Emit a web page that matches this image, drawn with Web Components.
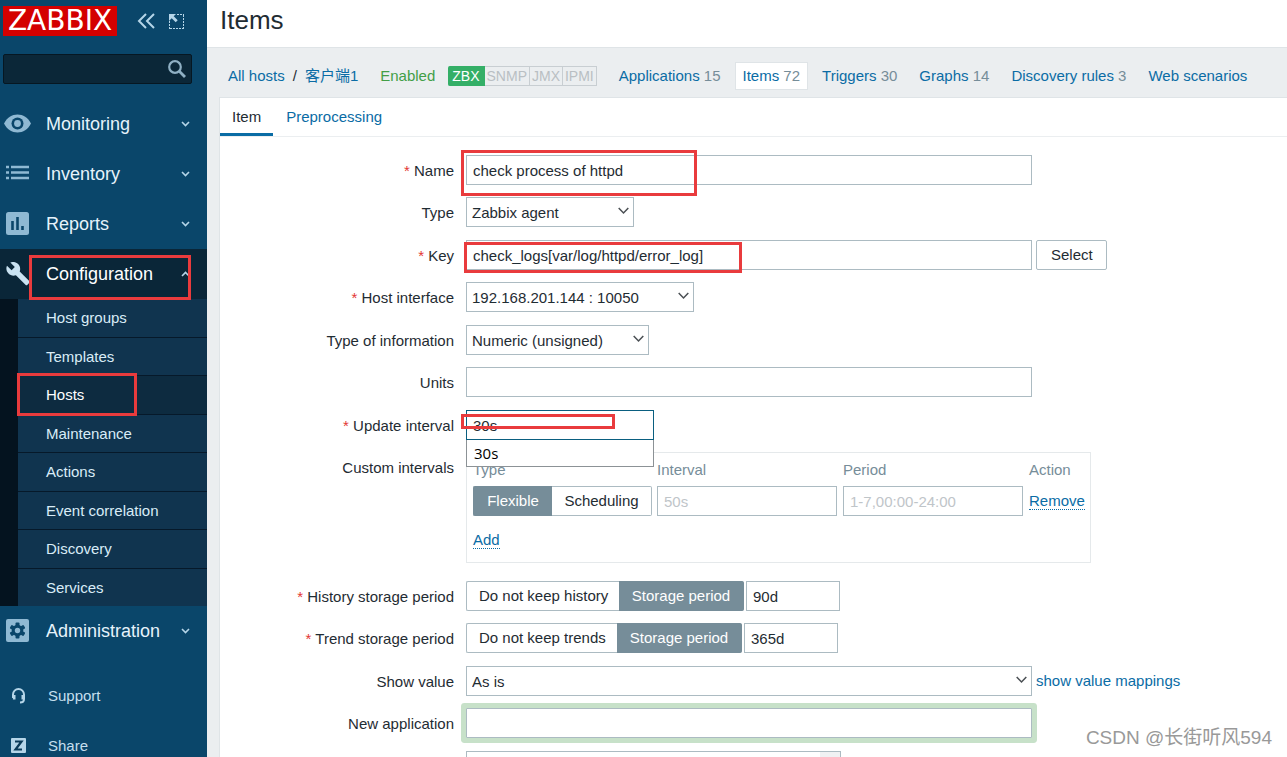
<!DOCTYPE html>
<html lang="en">
<head>
<meta charset="utf-8">
<title>Items</title>
<style>
html, body { margin: 0; height: 100%; }
body {
  font: 15px/20px "Liberation Sans", "Noto Sans CJK SC", sans-serif;
  color: #1f2c33;
  overflow: hidden;
}
</style>
</head>
<body>
<zbx-app></zbx-app>

<template id="t-app">
  <style>
    :host { display: flex; height: 100vh; overflow: hidden; background: #ebeef0; position: relative; }
    zbx-sidebar { flex: 0 0 207px; }
    main { flex: 1; min-width: 0; display: flex; flex-direction: column; overflow: hidden; }
    h1, zbx-host-nav { flex-shrink: 0; }
    h1 { margin: 0; padding: 0 13px 6px; height: 41px; line-height: 41px; font-size: 26px; font-weight: normal; background: #fff; border-bottom: 1px solid #dfe4e7; }
    .sheet { flex: 1 0 auto; margin-left: 12px; background: #fff; border: solid #dfe4e7; border-width: 1px 0 0 1px; }
    .watermark { position: absolute; right: 15px; bottom: 6px; font-size: 19px; line-height: 26px; color: #999; text-shadow: 1px 1px 0 #fff; white-space: nowrap; }
  </style>
  <zbx-sidebar></zbx-sidebar>
  <main>
    <h1>Items</h1>
    <zbx-host-nav></zbx-host-nav>
    <div class="sheet">
      <zbx-tabs></zbx-tabs>
      <zbx-item-form></zbx-item-form>
    </div>
  </main>
  <div class="watermark">CSDN @长街听风594</div>
</template>

<template id="t-sidebar">
  <style>
    :host { display: flex; flex-direction: column; background: #0a466a; color: #e6f3fb; overflow: hidden; }
    header, form, nav { flex-shrink: 0; }
    header { display: flex; align-items: center; padding: 6px 0 0 3px; height: 30px; }
    .logo { background: #d40000; color: #fff; font: 28px/30px "DejaVu Sans", sans-serif; width: 114px; height: 30px; text-align: center; text-decoration: none; }
    header button { background: none; border: 0; padding: 0; width: 20px; height: 20px; display: block; }
    .compact { margin: 0 10px 0 19px; }
    svg { display: block; }
    form { margin: 18px 15px 15px 3px; height: 30px; box-sizing: border-box; display: flex; align-items: center; background: #0b2738; border: 1px solid #061722; border-radius: 2px; padding-right: 4px; }
    form input { flex: 1; min-width: 0; background: none; border: 0; outline: 0; color: #fff; font: inherit; }
    form button { background: none; border: 0; padding: 0; }
    nav { display: block; }
    .foot { margin-top: 15px; }
  </style>
  <header>
    <a class="logo" href="#">ZABBIX</a>
    <button class="compact" type="button" aria-label="Collapse sidebar"><svg width="20" height="20" viewBox="0 0 20 20" fill="none" stroke="#b5d5e8" stroke-width="2"><path d="M10 3 3 10l7 7M18 3l-7 7 7 7"/></svg></button>
    <button type="button" aria-label="Hide sidebar"><svg width="20" height="20" viewBox="0 0 20 20"><path d="M11 3.500H18M17.500 4v14M3.500 10v8M4 17.500H18" fill="none" stroke="#b5d5e8" stroke-dasharray="2 1"/><path d="M3 3h7L7.700 5.300l4 4-2 2-4-4L3 10z" fill="#b5d5e8"/></svg></button>
  </header>
  <form role="search">
    <input type="text" aria-label="Search">
    <button type="button" aria-label="Search"><svg width="20" height="20" viewBox="0 0 20 20" fill="none" stroke="#8fb0c4"><circle cx="8" cy="8" r="5.800" stroke-width="2.200"/><path d="m12.300 12.300 5.700 5.700" stroke-width="2.800"/></svg></button>
  </form>
  <nav>
    <zbx-menu-item label="Monitoring"><svg slot="icon" width="28" height="20" viewBox="0 0 28 20"><path d="M0 9.500C3 3.500 8 .500 13.500.500S24 3.500 27 9.500c-3 6-8 9-13.500 9S3 15.500 0 9.500z" fill="#8fb9d3"/><circle cx="13.500" cy="9.500" r="6" fill="#0a466a"/><circle cx="13.500" cy="9.500" r="3.400" fill="#8fb9d3"/></svg></zbx-menu-item>
    <zbx-menu-item label="Inventory"><svg slot="icon" width="28" height="20" viewBox="0 0 28 20"><path d="M2 3h3M7 3h18M2 8.500h3M7 8.500h18M2 14h3M7 14h18" stroke="#8fb9d3" stroke-width="2.500"/></svg></zbx-menu-item>
    <zbx-menu-item label="Reports"><svg slot="icon" width="28" height="24" viewBox="0 0 28 24"><rect x="2" y="0" width="23" height="23" rx="2.500" fill="#8fb9d3"/><path d="M8.500 9v9M13.500 5v13M18.500 14v4" stroke="#0a466a" stroke-width="2.600"/></svg></zbx-menu-item>
    <zbx-menu-item label="Configuration" open>
      <svg slot="icon" width="28" height="24" viewBox="2 1 28 24"><path d="m27.500 20.200-9.800-9.800c1-2.500.400-5.400-1.600-7.400C14 .900 10.800.400 8.300 1.600l4.500 4.500-3.200 3.200L5 4.800C3.800 7.300 4.300 10.400 6.500 12.600c2 2 4.900 2.600 7.400 1.600l9.800 9.800c.400.400 1.100.400 1.500 0l2.400-2.400c.400-.400.400-1 0-1.400z" fill="#c9e2f1"/></svg>
      <zbx-submenu></zbx-submenu>
    </zbx-menu-item>
    <zbx-menu-item label="Administration"><svg slot="icon" width="28" height="24" viewBox="0 0 28 24"><rect x="2" y="0" width="23" height="23" rx="2" fill="#8fb9d3"/><g transform="translate(13.500 11.500)" fill="#0a466a"><circle r="5.800"/><rect x="-2" y="-8" width="4" height="16" rx="1"/><rect x="-2" y="-8" width="4" height="16" rx="1" transform="rotate(60)"/><rect x="-2" y="-8" width="4" height="16" rx="1" transform="rotate(120)"/><circle r="2.700" fill="#8fb9d3"/></g></svg></zbx-menu-item>
  </nav>
  <nav class="foot">
    <zbx-menu-item minor label="Support"><svg slot="icon" width="28" height="20" viewBox="0 0 28 20" fill="none" stroke="#b5d5e8"><path d="M13 12V8.500a5.500 5.500 0 0 1 11 0V13q0 3.500-4 3.500" stroke-width="2"/><path d="M14.200 9v4.500M22.800 9v4.500" stroke-width="2.600"/></svg></zbx-menu-item>
    <zbx-menu-item minor label="Share"><svg slot="icon" width="28" height="20" viewBox="0 0 28 20"><rect x="11" y="2" width="15" height="15" rx="1" fill="#b5d5e8"/><path d="M15 5.500h6.500l-6 8H22" fill="none" stroke="#0a3a58" stroke-width="2.200"/></svg></zbx-menu-item>
  </nav>
</template>

<template id="t-menu-item">
  <style>
    :host { display: block; }
    a { position: relative; display: flex; align-items: center; height: 50px; padding: 0 17px 0 4px; color: #e6f3fb; text-decoration: none; font-size: 18px; }
    .ico { flex: 0 0 42px; height: 27px; display: flex; align-items: center; }
    .ico ::slotted(svg) { display: block; }
    :host([minor]) a { font-size: 15px; color: #c5dfee; padding-left: 0; }
    :host([minor]) .ico { flex-basis: 48px; }
    .name { flex: 1; }
    .arrow { display: block; }
    :host([open]) .arrow { transform: scaleY(-1); }
    :host([minor]) .arrow { display: none; }
    :host([open]) a { background: #0a2638; color: #fff; }
    :host([open]) .mark { display: block; }
    .mark { display: none; position: absolute; left: 29px; right: 16px; top: 6px; height: 45px; box-sizing: border-box; border: 3px solid #e93b3d; z-index: 2; }
  </style>
  <a href="#"><span class="ico"><slot name="icon"></slot></span><span class="name"></span>
    <svg class="arrow" width="9" height="6" viewBox="0 0 9 6" fill="none" stroke="#b5d5e8" stroke-width="1.600"><path d="m1 1 3.500 3.500L8 1"/></svg><span class="mark"></span></a>
  <slot></slot>
</template>

<template id="t-submenu">
  <style>
    :host { display: block; padding-left: 18px; background: #04131f; }
    ul { list-style: none; margin: 0; padding: 0; background: #10344f; }
    li { position: relative; height: 38px; border-bottom: 1px solid #06192a; box-sizing: border-box; }
    li:nth-child(odd) { height: 39px; }
    li:last-child { height: 37px; border: 0; }
    a { display: flex; align-items: center; height: 100%; padding-left: 28px; color: #d9ecf7; text-decoration: none; }
    .on { background: #0d2b40; }
    .on a { color: #fff; padding-left: 26px; border-left: 2px solid #b5d5e8; }
    .mark { position: absolute; left: -1px; top: -3px; width: 120px; height: 43px; box-sizing: border-box; border: 3px solid #e93b3d; z-index: 2; }
  </style>
  <ul>
    <li><a href="#">Host groups</a></li>
    <li><a href="#">Templates</a></li>
    <li class="on"><a href="#">Hosts</a><span class="mark"></span></li>
    <li><a href="#">Maintenance</a></li>
    <li><a href="#">Actions</a></li>
    <li><a href="#">Event correlation</a></li>
    <li><a href="#">Discovery</a></li>
    <li><a href="#">Services</a></li>
  </ul>
</template>

<template id="t-host-nav">
  <style>
    :host { display: flex; align-items: center; height: 49px; padding: 6px 12px 0 21px; box-sizing: border-box; white-space: nowrap; }
    a { color: #0a6ca5; text-decoration: none; }
    .sep { margin: 0 8px; }
    .ok { color: #429e47; margin: 0 13px 0 22px; }
    .ifaces { display: flex; margin-right: 14px; font-size: 14px; line-height: 18px; }
    .ifaces span { border: 1px solid #c8ced2; border-left-width: 0; color: #b9bfc3; padding: 0 2px; }
    .ifaces .up { background: #34af67; border-color: #34af67; color: #fff; border-radius: 2px 0 0 2px; padding: 0 4px; }
    nav { display: flex; gap: 6px; }
    nav a { padding: 3px 7px; border: 1px solid transparent; }
    nav .on { background: #fff; border-color: #dfe4e7; }
    small { font-size: inherit; color: #768d99; }
  </style>
  <a href="#">All hosts</a><span class="sep">/</span><a href="#">客户端1</a>
  <span class="ok">Enabled</span>
  <span class="ifaces"><span class="up">ZBX</span><span>SNMP</span><span>JMX</span><span>IPMI</span></span>
  <nav>
    <a href="#">Applications <small>15</small></a>
    <a class="on" href="#">Items <small>72</small></a>
    <a href="#">Triggers <small>30</small></a>
    <a href="#">Graphs <small>14</small></a>
    <a href="#">Discovery rules <small>3</small></a>
    <a href="#">Web scenarios</a>
  </nav>
</template>

<template id="t-tabs">
  <style>
    :host { display: flex; height: 38px; border-bottom: 1px solid #ebeef0; }
    a { color: #0a6ca5; text-decoration: none; padding: 9px 13px 0; height: 38px; box-sizing: border-box; border-bottom: 3px solid transparent; }
    .on { color: #1f2c33; padding: 9px 12px 0 12px; border-color: #0a6ca5; }
  </style>
  <a class="on" href="#">Item</a><a href="#">Preprocessing</a>
</template>

<template id="t-row">
  <style>
    :host { display: flex; align-items: flex-start; padding-bottom: 12px; }
    :host(:nth-child(odd)) { padding-bottom: 13px; }
    :host([wide]) { padding-bottom: 18px; }
    .label { flex: 0 0 234px; height: 30px; text-align: right; line-height: 32px; margin-right: 12px; }
    :host([required]) .label::before { content: "* "; color: #e33734; }
    .field { flex: 1; min-width: 0; display: flex; align-items: center; gap: 4px; position: relative; }
  </style>
  <div class="label"><slot name="label"></slot></div>
  <div class="field"><slot></slot></div>
</template>

<template id="t-select">
  <style>
    :host { display: block; position: relative; }
    ::slotted(select) { appearance: none; display: block; width: 100%; height: 30px; box-sizing: border-box; margin: 0; padding: 1px 24px 0 5px; border: 1px solid #acbbc2; border-radius: 0; background: #fff; color: #1f2c33; font: inherit; }
    svg { position: absolute; right: 5px; top: 10px; pointer-events: none; }
  </style>
  <slot></slot>
  <svg width="11" height="8" viewBox="0 0 11 8" fill="none" stroke="#4a4f53" stroke-width="1.500"><path d="m.700 1 4.800 5 4.800-5"/></svg>
</template>

<template id="t-mark">
  <style>
    :host { position: absolute; box-sizing: border-box; border: 3px solid #e93b3d; pointer-events: none; z-index: 3; }
  </style>
</template>

<template id="t-form">
  <style>
    :host { display: block; padding-top: 18px; }
    input, button { font: inherit; color: inherit; box-sizing: border-box; margin: 0; }
    input[type=text] { height: 30px; border: 1px solid #acbbc2; background: #fff; padding: 0 6px; outline: 0; min-width: 0; }
    input::placeholder { color: #bfc5c9; }
    .full { flex: 0 1 566px; }
    button.box { height: 30px; border: 1px solid #acbbc2; border-radius: 2px; background: #fff; padding: 0 14px; width: 71px; }
    a { color: #0a6ca5; text-decoration: none; }
    .act { border-bottom: 1px dotted #0a6ca5; line-height: 16px; display: inline-block; }
    .seg { display: flex; position: relative; height: 30px; box-sizing: border-box; margin-right: -2px; line-height: 28px; }
    .seg input { position: absolute; opacity: 0; width: 1px; height: 1px; }
    .seg label { border: 1px solid #acbbc2; padding: 0 12px; text-align: center; white-space: nowrap; box-sizing: border-box; }
    .seg label:first-of-type { border-right: 0; border-radius: 2px 0 0 2px; }
    .seg label:last-of-type { border-left: 0; border-radius: 0 2px 2px 0; }
    .seg input:checked + label { background: #768d99; border-color: #768d99; color: #fff; }
    .keep label:first-of-type { width: 153px; }
    .trend label:first-of-type { width: 151px; }
    .keep label:last-of-type { width: 125px; }
    .short { width: 94px; }
    #delay { width: 188px; border-color: #0a5f80; }
    .options { position: absolute; top: 30px; left: 0; width: 188px; height: 27px; box-sizing: border-box; margin: 0; padding: 0 7px; list-style: none; border: 1px solid #8c9296; border-top: 0; background: #fff; color: #000; font: 15px/27px "Open Sans", sans-serif; z-index: 2; }
    .intervals { flex: 0 1 625px; height: 111px; box-sizing: border-box; border: 1px solid #e5e9eb; padding: 0 6px; }
    table { border-collapse: collapse; table-layout: fixed; width: 100%; }
    th, td { padding: 0; text-align: left; font-weight: normal; white-space: nowrap; }
    th { height: 33px; color: #768d99; }
    td { height: 30px; }
    td input[type=text] { width: 180px; display: block; }
    .typ { width: 179px; }
    .typ label:first-of-type { width: 79px; }
    .typ label:last-of-type { width: 100px; }
    .add td { height: 48px; }
    .focus { box-shadow: 0 0 0 5px #c7e1c9; border-radius: 1px; }
    .multi { display: flex; width: 375px; height: 60px; box-sizing: border-box; border: 1px solid #acbbc2; justify-content: flex-end; }
    .multi i { width: 20px; background: #f0f1f3; }
  </style>
  <zbx-row required><label slot="label" for="name">Name</label><input class="full" id="name" type="text" value="check process of httpd"><zbx-mark style="left:-5px;top:-5px;width:236px;height:46px"></zbx-mark></zbx-row>
  <zbx-row><label slot="label" for="type">Type</label><zbx-select style="width:168px"><select id="type"><option>Zabbix agent</option></select></zbx-select></zbx-row>
  <zbx-row required><label slot="label" for="key">Key</label><input class="full" id="key" type="text" value="check_logs[var/log/httpd/error_log]"><button class="box" type="button">Select</button><zbx-mark style="left:-2px;top:2px;width:278px;height:31px"></zbx-mark></zbx-row>
  <zbx-row required><label slot="label" for="iface">Host interface</label><zbx-select style="width:228px"><select id="iface"><option>192.168.201.144 : 10050</option></select></zbx-select></zbx-row>
  <zbx-row><label slot="label" for="vtype">Type of information</label><zbx-select style="width:183px"><select id="vtype"><option>Numeric (unsigned)</option></select></zbx-select></zbx-row>
  <zbx-row><label slot="label" for="units">Units</label><input class="full" id="units" type="text"></zbx-row>
  <zbx-row required><label slot="label" for="delay">Update interval</label><input id="delay" type="text" value="30s"><ul class="options"><li>30s</li></ul><zbx-mark style="left:-5px;top:4px;width:154px;height:15px"></zbx-mark></zbx-row>
  <zbx-row wide><span slot="label">Custom intervals</span>
    <div class="intervals">
      <table>
        <colgroup><col style="width:184px"><col style="width:186px"><col style="width:186px"><col></colgroup>
        <thead><tr><th>Type</th><th>Interval</th><th>Period</th><th>Action</th></tr></thead>
        <tbody>
          <tr><td><div class="seg typ"><input type="radio" name="it" id="it0" checked><label for="it0">Flexible</label><input type="radio" name="it" id="it1"><label for="it1">Scheduling</label></div></td>
            <td><input type="text" placeholder="50s" aria-label="Interval"></td>
            <td><input type="text" placeholder="1-7,00:00-24:00" aria-label="Period"></td>
            <td><a class="act" href="#">Remove</a></td></tr>
          <tr class="add"><td colspan="4"><a class="act" href="#">Add</a></td></tr>
        </tbody>
      </table>
    </div></zbx-row>
  <zbx-row required><label slot="label" for="history">History storage period</label>
    <div class="seg keep"><input type="radio" name="h" id="h0"><label for="h0">Do not keep history</label><input type="radio" name="h" id="h1" checked><label for="h1">Storage period</label></div><input class="short" id="history" type="text" value="90d"></zbx-row>
  <zbx-row required><label slot="label" for="trends">Trend storage period</label>
    <div class="seg keep trend"><input type="radio" name="t" id="t0"><label for="t0">Do not keep trends</label><input type="radio" name="t" id="t1" checked><label for="t1">Storage period</label></div><input class="short" id="trends" type="text" value="365d"></zbx-row>
  <zbx-row><label slot="label" for="map">Show value</label><zbx-select class="full"><select id="map"><option>As is</option></select></zbx-select><a href="#">show value mappings</a></zbx-row>
  <zbx-row><label slot="label" for="newapp">New application</label><input class="full focus" id="newapp" type="text"></zbx-row>
  <zbx-row><div class="multi"><i></i></div></zbx-row>
</template>

<script>
const define = (tag, templateId, setup) => customElements.define(tag, class extends HTMLElement {
  constructor() {
    super();
    this.attachShadow({ mode: "open" })
      .append(document.getElementById(templateId).content.cloneNode(true));
  }
  connectedCallback() { if (setup) setup(this); }
});
define("zbx-mark", "t-mark");
define("zbx-select", "t-select");
define("zbx-row", "t-row");
define("zbx-submenu", "t-submenu");
define("zbx-menu-item", "t-menu-item", el => {
  el.shadowRoot.querySelector(".name").textContent = el.getAttribute("label");
});
define("zbx-sidebar", "t-sidebar");
define("zbx-host-nav", "t-host-nav");
define("zbx-tabs", "t-tabs");
define("zbx-item-form", "t-form");
define("zbx-app", "t-app");
</script>
</body>
</html>
